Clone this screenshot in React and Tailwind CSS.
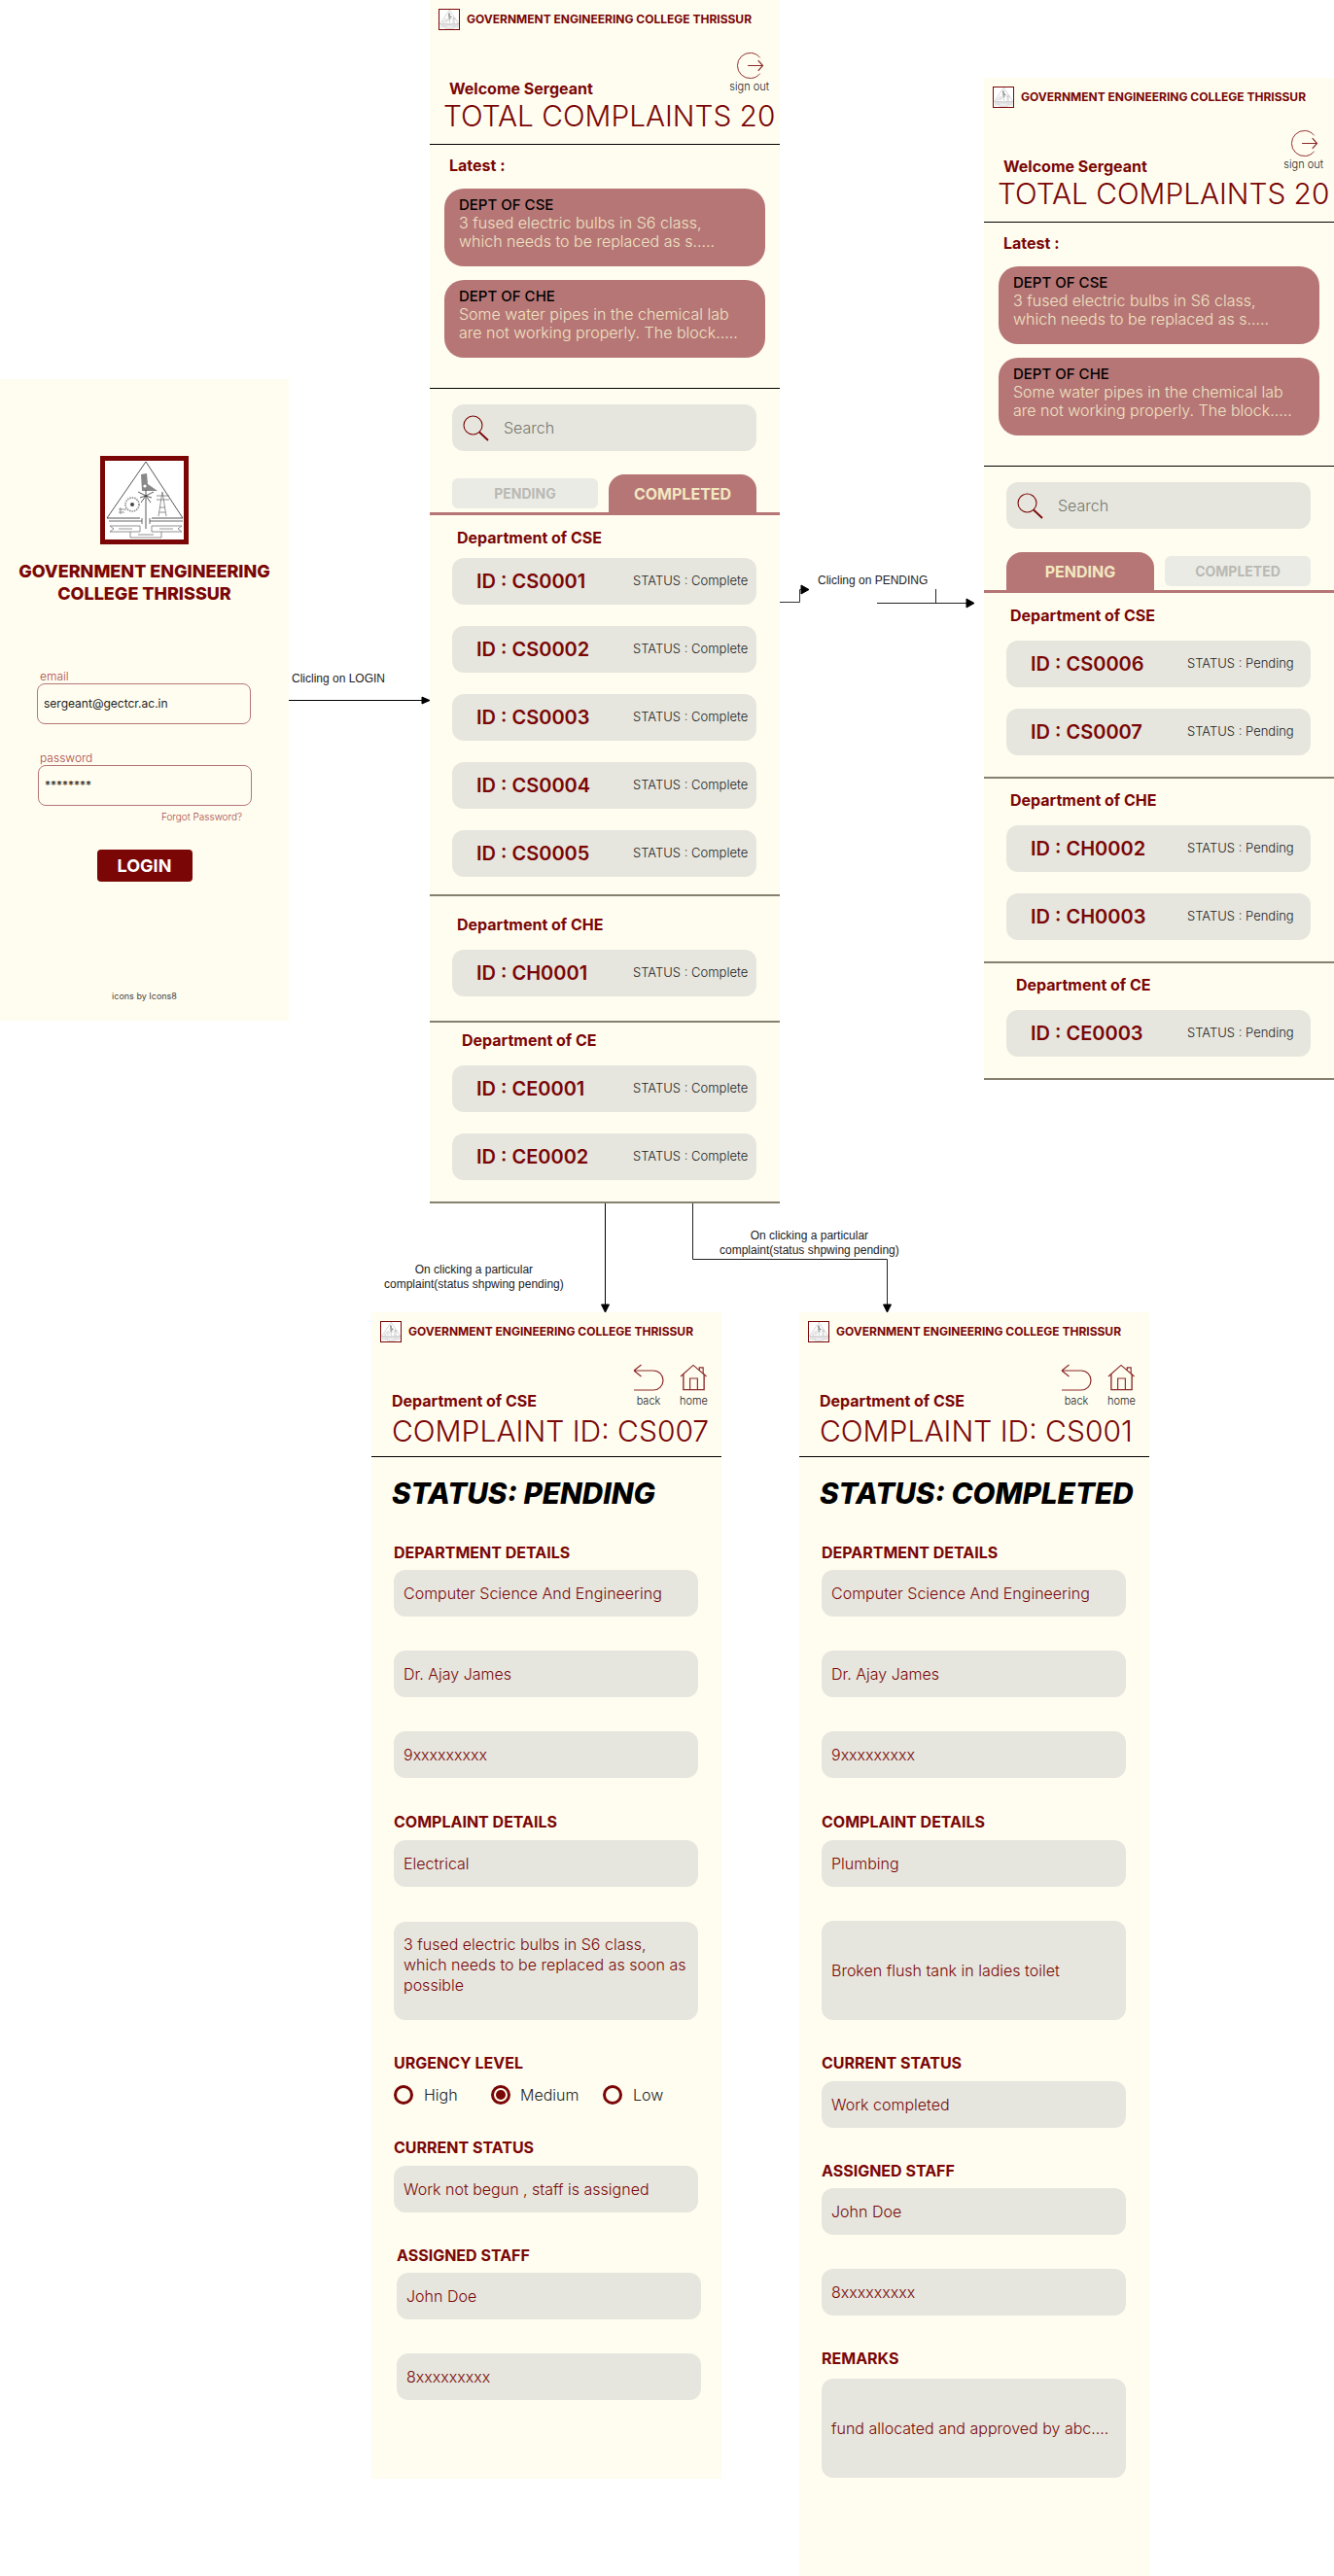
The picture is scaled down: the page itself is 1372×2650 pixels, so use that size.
import React from 'react';

const DEPT_CSE = ['CS0001', 'CS0002', 'CS0003', 'CS0004', 'CS0005'];

// college crest, kept rough since it is tiny in the picture
const Crest = ({ small }) => (
  <div className={small ? 'w-[22px] h-[22px] border border-[#7a0606] bg-white shrink-0' : 'w-[91px] h-[91px] border-[5px] border-[#7a0606] bg-white'}>
    <svg viewBox="0 0 81 81" className="w-full h-full block" fill="none" stroke="#777" strokeWidth="0.8">
      <path d="M42 1 L2 59 H36 M48 59 H80 L42 1" stroke="#555" strokeWidth="1" />
      <path d="M37 14 L38 31 H54 L44 24 L43 13 Z" fill="#888" stroke="none" />
      <circle cx="41" cy="26" r="1.6" fill="#fff" stroke="none" />
      <path d="M42 36 V70" strokeWidth="1.4" stroke="#888" />
      <path d="M42 36 L34 32 M42 36 L36 38 M42 36 L37 43 M42 36 L50 32 M42 36 L48 38 M42 36 L47 43 M42 36 L42 30" stroke="#333" />
      <circle cx="28" cy="45" r="7" strokeDasharray="1.5 1" strokeWidth="1.6" stroke="#888" />
      <circle cx="28" cy="45" r="2" fill="#444" stroke="none" />
      <path d="M14 50 H22 M14 53 H20 M16 48 V55" />
      <path d="M55 57 L59 32 L63 57 M53 36 H66 M53 40 H66 M56 48 H62 M56 53 H62" />
      <path d="M4 62 H38 M38 59 V65 M46 59 V65 M46 62 H80" stroke="#444" />
      <path d="M5 67 H36 V73 H5 L9 70 Z M48 67 H79 L75 70 L79 73 H48 Z" />
      <path d="M14 70 H28 M56 70 H70" strokeWidth="1.2" stroke="#999" />
      <path d="M26 73 V79 H58 V73 M34 76 H50" />
    </svg>
  </div>
);

const CollegeBar = () => (
  <div className="flex items-center gap-[7px] pl-[9px] pt-[9px] h-[31px]">
    <Crest small />
    <span className="text-[12px] font-bold leading-[22px] text-[#7a0606] whitespace-nowrap">
      GOVERNMENT ENGINEERING COLLEGE THRISSUR
    </span>
  </div>
);

const SignOutIcon = () => (
  <svg viewBox="0 0 30 30" className="w-[30px] h-[29px]" fill="none" stroke="#8c2a2a" strokeWidth="1">
    <path d="M26 6.5 A13.5 13.5 0 1 0 26 23.5" />
    <path d="M13 15 H29 M24 9.5 L29 15 L24 20.5" strokeWidth="1.2" />
  </svg>
);

const BackIcon = () => (
  <svg viewBox="0 0 32 28" className="w-[32px] h-[28px]" fill="none" stroke="#8c2a2a" strokeWidth="1.2">
    <path d="M1 7 L8.5 1 M1 7 L8.5 13 M1 7 H21 A10 10 0 0 1 21 27 H1" />
  </svg>
);

const HomeIcon = () => (
  <svg viewBox="0 0 30 28" className="w-[29px] h-[28px]" fill="none" stroke="#8c2a2a" strokeWidth="1.2">
    <path d="M1 13 L14.5 1 L28.5 13" />
    <path d="M21 6.5 V3.5 H25 V10" />
    <path d="M4 10.5 V27 H26 V10.5" strokeWidth="1.4" />
    <path d="M11 27 V15 H19 V27" />
  </svg>
);

const SearchIcon = () => (
  <svg viewBox="0 0 27 27" className="w-[27px] h-[27px] shrink-0" fill="none" stroke="#7a0606">
    <circle cx="10.5" cy="10.5" r="9.5" strokeWidth="1.1" />
    <path d="M17 17.5 L26 26" strokeWidth="1.8" />
  </svg>
);

const LatestCard = ({ dept, line1, line2 }) => (
  <div className="w-[330px] h-[80px] ml-[15px] rounded-[20px] bg-[#b67676] pl-[15px] pt-[7px]">
    <div className="text-[15px] font-medium leading-[19px] text-black">{dept}</div>
    <div className="text-[16px] font-light leading-[19px] text-[#efe3c2] whitespace-nowrap">{line1}</div>
    <div className="text-[16px] font-light leading-[19px] text-[#efe3c2] whitespace-nowrap">{line2}</div>
  </div>
);

const StatusRow = ({ id, status }) => (
  <div className="grid grid-cols-[161px_1fr] items-center h-[48px] ml-[23px] w-[313px] rounded-[12px] bg-[#e6e6de] pl-[25px] whitespace-nowrap">
    <span className="text-[20px] font-semibold text-[#7a0606]">ID : {id}</span>
    <span className="text-[13px] font-light text-[#222]">STATUS : {status}</span>
  </div>
);

const DeptSection = ({ title, ids, status, indent, pt, titleGap, pb }) => (
  <section className="border-b-2 border-[#85806f]" style={{ paddingTop: pt, paddingBottom: pb }}>
    <h3 className="text-[16px] font-bold leading-[20px] text-[#7a0606]" style={{ paddingLeft: indent, marginBottom: titleGap }}>
      {title}
    </h3>
    <div className="flex flex-col gap-[22px]">
      {ids.map((id) => (
        <StatusRow key={id} id={id} status={status} />
      ))}
    </div>
  </section>
);

const Tab = ({ active, children }) =>
  active ? (
    <div className="w-[152px] h-[39px] rounded-t-[16px] bg-[#b67676] flex items-center justify-center text-[16px] font-bold text-[#f2e8c0]">
      {children}
    </div>
  ) : (
    <div className="w-[150px] h-[31px] mb-[4px] rounded-[6px] bg-[#ebebe5] flex items-center justify-center text-[14px] font-bold text-[#b9b9b4]">
      {children}
    </div>
  );

const Dashboard = ({ className, pendingActive, children }) => (
  <div className={`absolute w-[360px] bg-[#fffdf0] ${className}`}>
    <div className="border-b border-black h-[149px]">
      <CollegeBar />
      <div className="flex justify-between h-[47px] mt-[22px] pl-[20px] pr-[11px]">
        <span className="self-end text-[16px] font-bold leading-[18px] text-[#7a0606]">Welcome Sergeant</span>
        <div className="flex flex-col items-center">
          <SignOutIcon />
          <span className="text-[11px] leading-[14px] font-light text-[#222]">sign out</span>
        </div>
      </div>
      <div className="pl-[14px] text-[29.8px] font-light leading-[38px] text-[#7a0606] whitespace-nowrap">
        TOTAL COMPLAINTS 20
      </div>
    </div>
    <div className="border-b border-black h-[251px]">
      <div className="pl-[20px] pt-[11px] pb-[14px] text-[16px] font-bold leading-[20px] text-[#7a0606]">Latest :</div>
      <div className="flex flex-col gap-[14px]">
        <LatestCard dept="DEPT OF CSE" line1="3 fused electric bulbs in S6 class," line2="which needs to be replaced as s....." />
        <LatestCard dept="DEPT OF CHE" line1="Some water pipes in the chemical lab" line2="are not working properly. The block....." />
      </div>
    </div>
    <div className="flex items-center gap-[15px] mt-[16px] ml-[23px] w-[313px] h-[48px] rounded-[12px] bg-[#e6e6de] pl-[11px]">
      <SearchIcon />
      <span className="text-[16px] font-light text-[#77776f]">Search</span>
    </div>
    <div className="flex items-end gap-[11px] mt-[24px] pl-[23px] border-b-[3px] border-[#b67676]">
      {pendingActive ? (
        <>
          <Tab active>PENDING</Tab>
          <Tab>COMPLETED</Tab>
        </>
      ) : (
        <>
          <Tab>PENDING</Tab>
          <Tab active>COMPLETED</Tab>
        </>
      )}
    </div>
    {children}
  </div>
);

const FieldLabel = ({ children, className = '' }) => (
  <div className={`text-[16px] font-bold leading-[20px] text-[#7a0606] whitespace-nowrap ${className}`}>{children}</div>
);

const Field = ({ children, tall, className = '' }) => (
  <div className={`flex items-center w-[313px] rounded-[12px] bg-[#e6e6de] pl-[10px] pr-[6px] text-[16px] font-light leading-[21px] text-[#7a0606] ${tall ? 'h-[102px]' : 'h-[48px]'} ${className}`}>
    <span>{children}</span>
  </div>
);

const DetailHeader = ({ status }) => (
  <>
    <div className="border-b border-black h-[149px]">
      <CollegeBar />
      <div className="flex justify-between h-[47px] mt-[22px] pl-[21px] pr-[14px]">
        <span className="self-end text-[16px] font-bold leading-[18px] text-[#7a0606]">Department of CSE</span>
        <div className="flex gap-[16px]">
          <div className="flex flex-col items-center w-[32px]">
            <BackIcon />
            <span className="mt-[3px] text-[11px] leading-[14px] font-light text-[#222]">back</span>
          </div>
          <div className="flex flex-col items-center w-[29px]">
            <HomeIcon />
            <span className="mt-[3px] text-[11px] leading-[14px] font-light text-[#222]">home</span>
          </div>
        </div>
      </div>
      <div className="pl-[21px] mt-[3px] text-[30px] font-light leading-[38px] text-[#7a0606] whitespace-nowrap">
        COMPLAINT ID: {status === 'PENDING' ? 'CS007' : 'CS001'}
      </div>
    </div>
    <div className="pl-[21px] pt-[19px] text-[29.7px] font-extrabold italic leading-[36px] text-black whitespace-nowrap">
      STATUS: {status}
    </div>
  </>
);

const DepartmentFields = () => (
  <>
    <FieldLabel className="mt-[33px]">DEPARTMENT DETAILS</FieldLabel>
    <Field className="mt-[8px]">Computer Science And Engineering</Field>
    <Field className="mt-[35px]">Dr. Ajay James</Field>
    <Field className="mt-[35px]">9xxxxxxxxx</Field>
    <FieldLabel className="mt-[35px]">COMPLAINT DETAILS</FieldLabel>
  </>
);

const Radio = ({ label, checked, className }) => (
  <div className={`flex items-center gap-[11px] ${className}`}>
    <div className="w-[20px] h-[20px] rounded-full border-[3px] border-[#7a0606] flex items-center justify-center">
      {checked && <div className="w-[10px] h-[10px] rounded-full bg-[#7a0606]" />}
    </div>
    <span className="text-[16px] font-light leading-[20px] text-[#222]">{label}</span>
  </div>
);

const PendingDetail = () => (
  <div className="absolute left-[382px] top-[1350px] w-[360px] h-[1200px] bg-[#fffdf0]">
    <DetailHeader status="PENDING" />
    <div className="pl-[23px]">
      <DepartmentFields />
      <Field className="mt-[9px]">Electrical</Field>
      <Field tall className="mt-[36px] !h-[101px] pb-[12px]">
        3 fused electric bulbs in S6 class, which needs to be replaced as soon as possible
      </Field>
      <FieldLabel className="mt-[34px]">URGENCY LEVEL</FieldLabel>
      <div className="flex mt-[13px]">
        <Radio label="High" className="w-[100px]" />
        <Radio checked label="Medium" className="w-[115px] !gap-[10px]" />
        <Radio label="Low" />
      </div>
      <FieldLabel className="mt-[34px]">CURRENT STATUS</FieldLabel>
      <Field className="mt-[9px]">Work not begun , staff is assigned</Field>
    </div>
    <div className="pl-[26px]">
      <FieldLabel className="mt-[34px]">ASSIGNED STAFF</FieldLabel>
      <Field className="mt-[8px]">John Doe</Field>
      <Field className="mt-[35px]">8xxxxxxxxx</Field>
    </div>
  </div>
);

const CompletedDetail = () => (
  <div className="absolute left-[822px] top-[1350px] w-[360px] h-[1300px] bg-[#fffdf0]">
    <DetailHeader status="COMPLETED" />
    <div className="pl-[23px]">
      <DepartmentFields />
      <Field className="mt-[9px]">Plumbing</Field>
      <Field tall className="mt-[35px]">Broken flush tank in ladies toilet</Field>
      <FieldLabel className="mt-[34px]">CURRENT STATUS</FieldLabel>
      <Field className="mt-[9px]">Work completed</Field>
      <FieldLabel className="mt-[34px]">ASSIGNED STAFF</FieldLabel>
      <Field className="mt-[8px]">John Doe</Field>
      <Field className="mt-[35px]">8xxxxxxxxx</Field>
      <FieldLabel className="mt-[34px]">REMARKS</FieldLabel>
      <Field tall className="mt-[11px]">fund allocated and approved by abc....</Field>
    </div>
  </div>
);

const LoginInput = ({ label, value, className }) => (
  <div className={className}>
    <div className="text-[12px] font-light leading-[14px] text-[#a84a4a]">{label}</div>
    <div className="flex items-center h-[42px] w-[220px] rounded-[8px] border border-[#b67676] pl-[6px] text-[12px] text-[#222]">
      {value}
    </div>
  </div>
);

const Login = () => (
  <div className="absolute left-0 top-[390px] w-[297px] h-[660px] bg-[#fffdf0] flex flex-col">
    <div className="flex justify-center mt-[79px]">
      <Crest />
    </div>
    <h1 className="mt-[16px] text-center text-[18px] font-extrabold leading-[23px] text-[#7a0606]">
      GOVERNMENT ENGINEERING
      <br />
      COLLEGE THRISSUR
    </h1>
    <LoginInput className="mt-[67px] ml-[38px]" label={<span className="pl-[3px]">email</span>} value="sergeant@gectcr.ac.in" />
    <LoginInput className="mt-[28px] ml-[39px]" label={<span className="pl-[2px]">password</span>} value="********" />
    <div className="mt-[4px] pr-[48px] text-right text-[10px] font-light leading-[14px] text-[#a84a4a]">Forgot Password?</div>
    <div className="self-center mt-[27px] w-[98px] h-[33px] rounded-[4px] bg-[#7a0606] flex items-center justify-center text-[18px] font-bold text-white">
      LOGIN
    </div>
    <div className="mt-[112px] text-center text-[9px] leading-[12px] text-[#444]">icons by Icons8</div>
  </div>
);

// flow arrows between the screens
const Connectors = () => (
  <svg className="absolute left-0 top-0 w-[1372px] h-[1360px] pointer-events-none" viewBox="0 0 1372 1360" fill="none" stroke="#000" strokeWidth="1">
    <path d="M297 720.5 H436" />
    <path d="M442 720.5 L434 717 V724 Z" fill="#000" />
    <path d="M802 619.5 H822.5 V606.5 H826" stroke="#333" />
    <path d="M832 606.5 L824 602 V611 Z" fill="#000" />
    <path d="M902 620.5 H996 M962.5 606 V620" stroke="#222" />
    <path d="M1002 620.5 L994 616 V625 Z" fill="#000" />
    <path d="M622.5 1238 V1344" />
    <path d="M622.5 1350 L618.5 1342 H626.5 Z" fill="#000" />
    <path d="M712.5 1238 V1295.5 H912.5 V1344" stroke="#222" />
    <path d="M912.5 1350 L908.5 1342 H916.5 Z" fill="#000" />
  </svg>
);

const FlowLabel = ({ className, children }) => (
  <div className={`absolute font-['Liberation_Sans',sans-serif] text-[12px] leading-[15px] text-[#222] text-center whitespace-nowrap ${className}`}>
    {children}
  </div>
);

export default function App() {
  return (
    <div className="relative w-[1372px] h-[2650px] bg-white overflow-hidden font-['Inter',sans-serif]">
      <Connectors />
      <Login />
      <Dashboard className="left-[442px] top-0">
        <DeptSection title="Department of CSE" ids={DEPT_CSE} status="Complete" indent={28} pt={13} titleGap={11} pb={18} />
        <DeptSection title="Department of CHE" ids={['CH0001']} status="Complete" indent={28} pt={19} titleGap={16} pb={25} />
        <DeptSection title="Department of CE" ids={['CE0001', 'CE0002']} status="Complete" indent={33} pt={8} titleGap={16} pb={22} />
      </Dashboard>
      <Dashboard className="left-[1012px] top-[80px]" pendingActive>
        <DeptSection title="Department of CSE" ids={['CS0006', 'CS0007']} status="Pending" indent={27} pt={13} titleGap={16} pb={22} />
        <DeptSection title="Department of CHE" ids={['CH0002', 'CH0003']} status="Pending" indent={27} pt={12} titleGap={16} pb={22} />
        <DeptSection title="Department of CE" ids={['CE0003']} status="Pending" indent={33} pt={12} titleGap={16} pb={22} />
      </Dashboard>
      <PendingDetail />
      <CompletedDetail />
      <FlowLabel className="left-[300px] top-[691px]">Clicling on LOGIN</FlowLabel>
      <FlowLabel className="left-[841px] top-[590px]">Clicling on PENDING</FlowLabel>
      <FlowLabel className="left-[395px] top-[1299px]">
        On clicking a particular
        <br />
        complaint(status shpwing pending)
      </FlowLabel>
      <FlowLabel className="left-[740px] top-[1264px]">
        On clicking a particular
        <br />
        complaint(status shpwing pending)
      </FlowLabel>
    </div>
  );
}
